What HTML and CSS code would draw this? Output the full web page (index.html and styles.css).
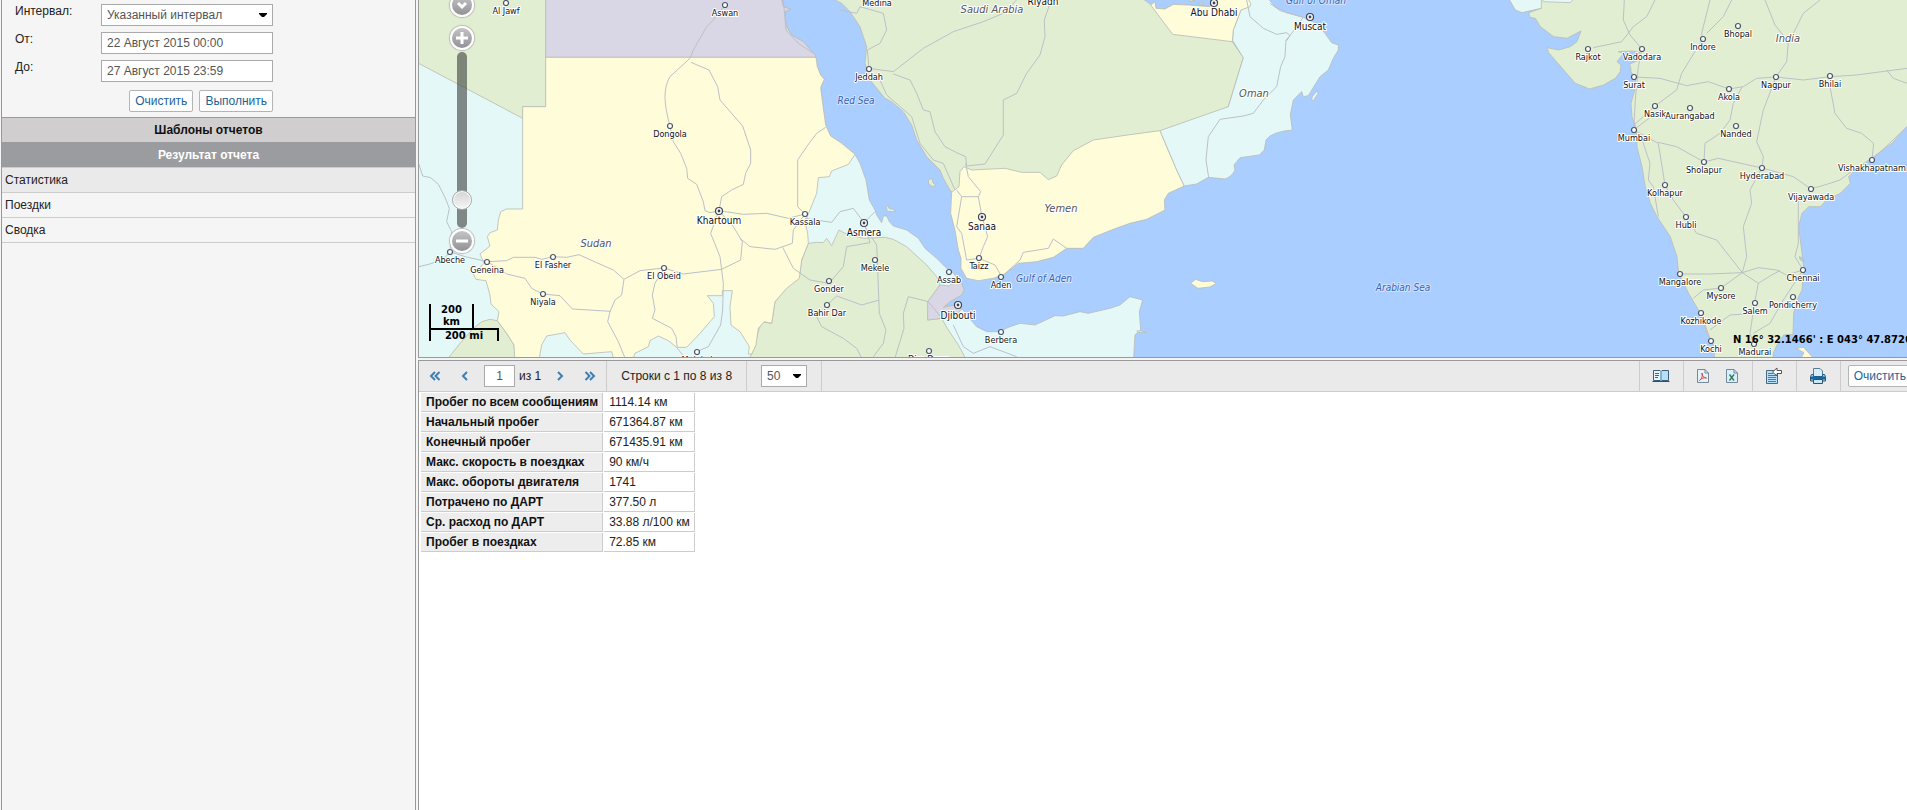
FILE: index.html
```html
<!DOCTYPE html>
<html lang="ru">
<head>
    <meta charset="UTF-8">
    <meta name="viewport" content="width=device-width, initial-scale=1.0">
    <title>Отчеты</title>
    <link rel="stylesheet" href="styles.css">
</head>
<body>
    <aside class="sidebar">
        <form class="report-form">
            <div class="form-row">
                <label for="interval">Интервал:</label>
                <select id="interval" class="field">
                    <option>Указанный интервал</option>
                </select>
            </div>
            <div class="form-row">
                <label for="date-from">От:</label>
                <input type="text" id="date-from" class="field" value="22 Август 2015 00:00">
            </div>
            <div class="form-row">
                <label for="date-to">До:</label>
                <input type="text" id="date-to" class="field" value="27 Август 2015 23:59">
            </div>
            <div class="form-actions">
                <button type="button" class="btn">Очистить</button>
                <button type="button" class="btn">Выполнить</button>
            </div>
        </form>
        <h2 class="panel-title">Шаблоны отчетов</h2>
        <h2 class="panel-title active">Результат отчета</h2>
        <ul class="result-list">
            <li class="selected"><a href="#stat">Статистика</a></li>
            <li><a href="#trips">Поездки</a></li>
            <li><a href="#summary">Сводка</a></li>
        </ul>
    </aside>

    <main class="content">
        <section class="map">
            <svg class="map-canvas" aria-label="Карта">
                <defs>
                    <g id="town"><circle r="2.5" fill="#fff" stroke="#4a5568" stroke-width="1.2"/></g>
                    <g id="capital"><circle r="3.5" fill="#fff" stroke="#3a4254" stroke-width="1.2"/><circle r="1.4" fill="#3a4254"/></g>
                </defs>

                <g transform="translate(-9 0) scale(.33333)">
                    <!-- Africa -->
                    <path class="land cyan" d="M20 -10H1113L1120 20 1143 28 1125 35 1128 75 1145 105 1180 125 1215 165 1222 200 1232 225 1243 238 1232 262 1238 310 1247 375 1262 408 1295 430 1335 463 1350 490 1368 540 1378 600 1395 630 1400 645 1415 668 1420 648 1430 648 1438 665 1450 678 1490 690 1525 715 1545 745 1580 775 1605 800 1630 820 1655 850 1663 870 1655 885 1620 905 1605 922 1635 915 1655 925 1670 945 1700 980 1730 995 1765 995 1800 980 1830 970 1875 975 1935 947 1960 948 2010 935 2035 940 2100 925 2130 915 2160 890 2198 900 2188 935 2192 990 2175 1005 2170 1090H20Z"/>
                    <path class="land green" d="M20 -10H407V320H338V355L20 187Z"/>
                    <path class="land violet" d="M407 -10H1113L1120 20 1143 28 1125 35 1128 75 1145 105 1180 125 1215 165 1218 172H407Z"/>
                    <path class="land green" d="M115 1074L150 1030 190 985 215 965 240 958 262 962 290 1000 312 1035 317 1090H100Z"/>
                    <path class="land green" d="M1195 730L1220 727 1240 728 1250 715 1265 737 1287 690 1305 700 1360 715 1425 712 1450 718 1490 740 1550 795 1580 830 1590 855 1555 905 1553 960 1595 955 1612 985 1645 1035 1675 1090H1010L1025 1062 1035 1040 1043 1000 1055 965 1085 970 1095 905 1150 840 1168 830 1175 780Z"/>
                    <path class="land violet" d="M1590 855L1618 858 1625 850 1655 850 1663 870 1655 885 1620 905 1600 922 1635 915 1655 927 1630 958 1595 955 1553 960V905Z"/>
                    <path class="land yellow" d="M407 172H1218L1222 200 1232 225 1243 238 1232 262 1238 310 1247 375 1262 408 1295 430 1335 463 1315 493 1265 513 1258 530 1225 533 1220 580 1200 630 1185 665 1193 700 1195 730 1175 780 1168 835 1130 865 1095 905 1085 970 1063 965 1045 985 1038 1035 1025 1062H1015L1018 1040 990 995 963 975 960 920 967 872H937V887H892L910 910 913 950 870 1000 830 1042H800L775 1022 745 1008 720 1022 715 1040 675 1060 665 1090H615L605 1055 520 1062 480 1020 465 998 410 1008 395 1035 385 1090H315L312 1035 290 1000 262 962 267 935 243 912 240 885 228 842 198 838 190 822 222 790 210 762 240 738 232 710 240 698 262 690 265 660 272 635 290 627 338 627V320H407Z"/>
                    <!-- Arabian peninsula -->
                    <path class="land green" d="M1255 -10L1295 10 1320 35 1350 80 1370 140 1365 190 1380 240 1425 295 1445 305 1480 335 1505 375 1520 420 1550 470 1590 510 1600 535 1620 570 1640 590 1915 575 2250 420 2455 320 2500 173 2467 125 2230 -10Z"/>
                    <path class="land yellow" d="M1625 577L1647 560 1650 515 1662 500 1685 510 1785 505 1835 517 1890 517 1915 539 1940 528 1955 495 1990 452 2050 420 2160 404 2250 392 2300 510 2323 558 2275 580 2263 600 2265 630 2210 658 2160 670 2110 688 2050 712 2020 745H1970L1930 772 1880 785 1825 790 1785 822 1750 835 1705 842 1670 835 1653 805V775L1645 750 1635 690 1622 640Z"/>
                    <path class="land cyan" d="M2510 -10L2520 18 2493 30 2470 90 2468 122 2500 173 2455 320 2250 392 2300 510 2323 558 2360 552 2395 532 2445 537Q2466 530 2475 510L2472 495 2490 473 2548 465 2563 450 2568 420Q2585 395 2647 390L2641 345 2650 300 2675 275 2680 290 2695 287 2730 230 2755 210 2770 175 2785 150V135L2765 128 2745 100 2720 70 2680 52 2630 38 2595 20 2570 -10Z"/>
                    <path class="land sea" d="M2190 -10L2238 25 2265 27 2290 13 2335 15 2400 20 2425 -10Z"/>
                    <path class="land yellow" d="M2222 15L2235 5 2238 25 2265 27 2290 13 2335 15 2400 20 2425 -10H2510L2522 10 2520 20 2493 30 2470 90 2467 125 2288 103Z"/>
                    <path class="land green" d="M2363 10l15-2 4 3-12 2zM2335-2l20 4-12 3zM1555 540l10-5 5 15 8 5-10 5-12-8z"/>
                    <path class="land cyan" d="M2705 300l2-10 14-18 3 8-14 22zM1430 618l5 0 2 8 12 2 10 7-28-2zM2180 993l15 0 14 5-25-1z"/>
                    <path class="land yellow" d="M2342 850l15-12 20 7 30-2 12 8-20 10-35 4z"/>
                    <!-- India -->
                    <path class="land cyan" d="M3293 -10L3316 30 3336 38 3371 30 3394 25 3500 10 3570 -10Z"/>
                    <path class="land green" d="M3394 -10V25L3356 38 3360 52 3376 55 3391 80 3431 110 3471 115 3513 93 3501 125 3481 140 3446 150 3411 143 3416 158 3461 210 3496 250 3539 267 3581 255 3616 235 3631 215 3633 195 3621 185 3641 160 3625 155 3670 153 3690 158 3688 180 3658 193 3662 200 3663 215 3676 235V265L3663 310 3666 350 3679 385 3681 440 3696 500 3706 560 3721 610 3741 650 3781 710 3801 770 3806 820 3836 880 3871 940 3891 1000 3913 1040V1090H4090V1060L4101 1035 4121 1005 4149 1003 4151 940 4159 905 4176 870 4181 800 4176 760 4166 680 4176 640 4196 620 4231 620 4250 600 4291 580 4321 550 4316 530 4341 505 4391 470 4446 430 4491 380 4560 330V-10H3500L3480 8 3400 5Z"/>
                    <path class="land sea" d="M4168 770l10 4 5 12-12-6z"/>
                    <path class="land yellow" d="M4159 1045L4181 1042 4215 1080H4170L4182 1058Z"/>

                    <g class="roads">
                        <path d="M27 493L38 528 62 533 85 553 105 592 118 625 110 665 125 695 120 755 165 770 232 785 290 782 310 772H375L395 778 428 770 470 772 507 764 560 788 610 810 642 838 635 885 615 900 600 935 593 965 625 1025 645 1074M27 800L60 792 100 778 120 755M232 785L290 822 345 835 365 865 398 882 450 887 487 927 602 934M642 838L690 812 762 804 820 822 935 808 992 780 997 725 970 680 927 632M762 804L735 850 727 885 735 930 727 955 785 985 798 1010 802 1045 825 1074"/>
                        <path d="M945 15L910 60 890 80 850 150 840 175 780 230Q765 255 765 290T780 378L790 425 812 460 830 505 833 535 860 553 880 605 885 632 900 638 927 632 935 590 965 570 1000 553 1007 520 1022 490V450L998 378 930 300 923 260 897 210 843 187M927 632L1000 643 1070 640 1135 655 1185 642 1163 620V480L1190 440 1220 400 1247 382M927 632L902 700 930 770 940 850 938 930 932 975 895 1040 860 1055M990 715L1020 740 1095 748 1147 730 1150 690 1185 642M1118 742L1150 805 1200 840 1257 850 1300 800 1310 740 1380 728 1362 668 1330 625 1290 635 1265 667 1185 655M1362 668L1395 635M1365 680L1400 735 1402 780 1408 940 1428 990 1420 1030 1390 1070M1251 915L1280 888 1355 915 1408 900M1251 915L1220 950 1235 980 1300 1015 1340 1045 1355 1074M1630 975L1660 1040 1690 1060 1740 1040 1820 1070M1555 905L1495 890 1480 940 1482 985 1455 1074M1555 905L1590 948"/>
                        <path d="M1120 0L1128 90 1165 130 1210 160M1290 30L1340 40 1350 20 1420 40 1430 90 1410 130 1372 150 1377 205 1450 215 1540 145 1630 95 1720 65 1780 40 1820 0M1920 10L1903 60 1905 110 1890 165 1850 220 1820 280 1780 300V405L1725 492 1670 498 1667 470 1640 458 1605 440 1575 395 1560 335 1540 330 1520 280 1500 240 1450 222M1410 240L1430 285 1505 350 1530 430 1570 480 1600 490 1635 570M1667 490L1675 530 1712 575 1705 590H1655L1640 570M1705 590L1716 650 1733 710 1720 740 1707 775 1755 795 1775 830 1830 780 1840 757 1915 745 1930 717 1970 745M1655 590L1640 680 1655 700 1670 780 1707 775"/>
                        <path d="M2510 0L2520 50 2560 85 2600 103 2630 98 2640 107 2628 120 2625 170 2612 200 2600 260 2560 300 2530 340 2500 348 2430 358 2395 410 2388 480 2396 532M2640 107L2680 52M2640 107L2630 122M2580 10L2610 32 2680 52"/>
                        <path d="M3643 0L3640 60 3660 105 3696 147 3685 200 3676 300 3671 390 3730 345M3550 143L3635 125 3670 80 3710 50 3735 0M3900 0L3875 100 3878 117 3815 220 3800 270 3735 318 3672 375M3965 0L3940 50 3890 100M4065 0L4095 75 4135 125 4130 185 4098 231 4060 330 4040 425 4060 470 4056 504 4020 570 4025 610 4000 680 4010 770 3997 818 3920 720 3860 700 3828 651 3790 600 3765 555 3745 430 3672 390M4230 0L4180 40 4150 100M3672 231L3750 235 3830 257 3895 245 3957 267 4000 260 4040 235 4098 231 4180 240 4260 230 4340 225 4491 205M3997 260L3970 310 3960 360 3930 400 3885 430 3882 486 3925 475 4056 504 4150 530 4203 567 4260 550 4290 540 4330 510 4386 480 4491 380M3882 486L3800 440 3745 427M4260 260L4275 340 4310 385 4355 400 4391 430 4386 480M4430 210L4450 235 4491 250M3810 822L3900 822 3997 818 4045 803 4100 810 4130 825 4179 810M3997 818L3933 864 3880 870 3850 895M3997 818L4045 850 4085 825 4110 812M4045 850L4034 909 4020 1000 4032 1034M3900 990L3960 945 4034 940M4179 810L4120 900 4080 970 4030 1000M4165 600V730L4155 770 4179 810M3690 400L3720 490 3715 540 3730 560 3745 650M3873 940L3903 1024"/>
                    </g>
                </g>

                <g class="labels" transform="translate(-419 0)">
                    <use href="#town" x="506" y="3"/><text x="506" y="14">Al Jawf</text>
                    <use href="#town" x="725" y="5"/><text x="725" y="16">Aswan</text>
                    <use href="#town" x="670" y="126"/><text x="670" y="137">Dongola</text>
                    <use href="#town" x="553" y="257"/><text x="553" y="268">El Fasher</text>
                    <use href="#town" x="487" y="262"/><text x="487" y="273">Geneina</text>
                    <use href="#town" x="450" y="252"/><text x="450" y="263">Abeche</text>
                    <use href="#town" x="543" y="294"/><text x="543" y="305">Niyala</text>
                    <use href="#town" x="664" y="268"/><text x="664" y="279">El Obeid</text>
                    <use href="#town" x="697" y="352"/><text x="697" y="363">Malakal</text>
                    <text x="877" y="6">Medina</text>
                    <use href="#town" x="869" y="69"/><text x="869" y="80">Jeddah</text>
                    <use href="#town" x="805" y="214"/><text x="805" y="225">Kassala</text>
                    <use href="#town" x="875" y="260"/><text x="875" y="271">Mekele</text>
                    <use href="#town" x="949" y="272"/><text x="949" y="283">Assab</text>
                    <use href="#town" x="829" y="281"/><text x="829" y="292">Gonder</text>
                    <use href="#town" x="827" y="305"/><text x="827" y="316">Bahir Dar</text>
                    <use href="#town" x="1001" y="332"/><text x="1001" y="343">Berbera</text>
                    <use href="#town" x="929" y="351"/><text x="929" y="362">Dire Dawa</text>
                    <use href="#town" x="979" y="258"/><text x="979" y="269">Taizz</text>
                    <use href="#town" x="1001" y="277"/><text x="1001" y="288">Aden</text>
                    <use href="#town" x="1738" y="26"/><text x="1738" y="37">Bhopal</text>
                    <use href="#town" x="1703" y="39"/><text x="1703" y="50">Indore</text>
                    <use href="#town" x="1588" y="49"/><text x="1588" y="60">Rajkot</text>
                    <use href="#town" x="1642" y="49"/><text x="1642" y="60">Vadodara</text>
                    <use href="#town" x="1634" y="77"/><text x="1634" y="88">Surat</text>
                    <use href="#town" x="1776" y="77"/><text x="1776" y="88">Nagpur</text>
                    <use href="#town" x="1830" y="76"/><text x="1830" y="87">Bhilai</text>
                    <use href="#town" x="1729" y="89"/><text x="1729" y="100">Akola</text>
                    <use href="#town" x="1655" y="106"/><text x="1655" y="117">Nasik</text>
                    <use href="#town" x="1690" y="108"/><text x="1690" y="119">Aurangabad</text>
                    <use href="#town" x="1736" y="126"/><text x="1736" y="137">Nanded</text>
                    <use href="#town" x="1634" y="130"/><text x="1634" y="141">Mumbai</text>
                    <use href="#town" x="1704" y="162"/><text x="1704" y="173">Sholapur</text>
                    <use href="#town" x="1762" y="168"/><text x="1762" y="179">Hyderabad</text>
                    <use href="#town" x="1872" y="160"/><text x="1872" y="171">Vishakhapatnam</text>
                    <use href="#town" x="1665" y="185"/><text x="1665" y="196">Kolhapur</text>
                    <use href="#town" x="1811" y="189"/><text x="1811" y="200">Vijayawada</text>
                    <use href="#town" x="1686" y="217"/><text x="1686" y="228">Hubli</text>
                    <use href="#town" x="1680" y="274"/><text x="1680" y="285">Mangalore</text>
                    <use href="#town" x="1721" y="288"/><text x="1721" y="299">Mysore</text>
                    <use href="#town" x="1803" y="270"/><text x="1803" y="281">Chennai</text>
                    <use href="#town" x="1793" y="297"/><text x="1793" y="308">Pondicherry</text>
                    <use href="#town" x="1755" y="303"/><text x="1755" y="314">Salem</text>
                    <use href="#town" x="1701" y="313"/><text x="1701" y="324">Kozhikode</text>
                    <use href="#town" x="1711" y="341"/><text x="1711" y="352">Kochi</text>
                    <use href="#town" x="1754" y="344"/><text x="1755" y="355">Madurai</text>

                    <g class="capitals">
                        <use href="#capital" x="719" y="211"/><text x="719" y="224">Khartoum</text>
                        <use href="#capital" x="864" y="223"/><text x="864" y="236">Asmera</text>
                        <use href="#capital" x="958" y="305"/><text x="958" y="319">Djibouti</text>
                        <use href="#capital" x="982" y="217"/><text x="982" y="230">Sanaa</text>
                        <use href="#capital" x="1214" y="3"/><text x="1214" y="16">Abu Dhabi</text>
                        <use href="#capital" x="1310" y="17"/><text x="1310" y="30">Muscat</text>
                        <text x="1043" y="5">Riyadh</text>
                    </g>
                    <g class="countries">
                        <text x="596" y="247">Sudan</text>
                        <text x="992" y="13">Saudi Arabia</text>
                        <text x="1061" y="212">Yemen</text>
                        <text x="1254" y="97">Oman</text>
                        <text x="1788" y="42">India</text>
                    </g>
                    <g class="waters">
                        <text x="856" y="104">Red Sea</text>
                        <text x="1044" y="282">Gulf of Aden</text>
                        <text x="1403" y="291">Arabian Sea</text>
                        <text x="1316" y="4">Gulf of Oman</text>
                    </g>
                </g>
            </svg>

            <div class="map-zoom">
                <button type="button" class="round" aria-label="Вниз">
                    <svg width="12" height="12" viewBox="0 0 12 12"><path d="M2 4l4 4 4-4"/></svg>
                </button>
                <button type="button" class="round" aria-label="Приблизить">
                    <svg width="14" height="14" viewBox="0 0 14 14"><path d="M7 1v12M1 7h12"/></svg>
                </button>
                <input type="range" class="zoom-slider" aria-label="Масштаб" min="0" max="17" value="2">
                <button type="button" class="round" aria-label="Отдалить">
                    <svg width="14" height="14" viewBox="0 0 14 14"><path d="M1 7h12"/></svg>
                </button>
            </div>
            <div class="map-scale">
                <div class="scale-km">200 km</div>
                <div class="scale-mi">200 mi</div>
            </div>
            <div class="map-coords">N 16° 32.1466' : E 043° 47.8726'</div>
        </section>

        <section class="report">
            <div class="toolbar">
                <div class="tool-group pager">
                    <button type="button" class="icon-btn" aria-label="Первая"><svg class="arrow" width="12" height="12" viewBox="0 0 12 12"><path d="M6 2L2 6l4 4M10.500 2l-4 4 4 4"/></svg></button>
                    <button type="button" class="icon-btn" aria-label="Назад"><svg class="arrow" width="12" height="12" viewBox="0 0 12 12"><path d="M8 2L4 6l4 4"/></svg></button>
                    <label class="page-box"><input type="text" class="page-input" value="1"> из 1</label>
                    <button type="button" class="icon-btn" aria-label="Вперед"><svg class="arrow" width="12" height="12" viewBox="0 0 12 12"><path d="M4 2l4 4-4 4"/></svg></button>
                    <button type="button" class="icon-btn" aria-label="Последняя"><svg class="arrow" width="12" height="12" viewBox="0 0 12 12"><path d="M1.500 2l4 4-4 4M6 2l4 4-4 4"/></svg></button>
                </div>
                <div class="tool-group rows-info">Строки с 1 по 8 из 8</div>
                <div class="tool-group">
                    <select class="field page-size" aria-label="Строк на странице">
                        <option>50</option>
                    </select>
                </div>
                <div class="toolbar-right">
                    <div class="tool-group single">
                        <button type="button" class="icon-btn" aria-label="Показать">
                            <svg width="18" height="14" viewBox="0 0 18 14"><path d="M1.500 1.500H8L9 2.500l1-1h6.500v10H10l-1 1-1-1H1.500z" fill="#e9f6fd" stroke="#3b5f7a"/><path d="M10 2h6v9h-6z" fill="#b9def4"/><path d="M.5 12.500h17" stroke="#3b4d5c"/><path d="M9 2.500v10M3 4.500h4M3 6.500h4M3 8.500h3" stroke="#1b6fa8" fill="none"/></svg>
                        </button>
                    </div>
                    <div class="tool-group files">
                        <button type="button" class="icon-btn" aria-label="PDF">
                            <svg width="12" height="14" viewBox="0 0 12 14"><path d="M.5.500H8L11.500 4v9.500H.5z" fill="#e3f3fc" stroke="#75899a"/><path d="M8 .5V4h3.500" fill="none" stroke="#75899a"/><path d="M2.500 11.500C5 9.500 6 6.500 5 4c-.5 3 2 4.500 4.500 5C7 8.500 4.500 9 2.500 11.500z" fill="none" stroke="#e0453a"/></svg>
                        </button>
                        <button type="button" class="icon-btn" aria-label="Excel">
                            <svg width="12" height="14" viewBox="0 0 12 14"><path d="M.5.500H8L11.500 4v9.500H.5z" fill="#d9effb" stroke="#75899a"/><path d="M8 .5V4h3.500" fill="none" stroke="#75899a"/><path d="M3.500 5.500l4.500 6M8 5.500l-4.500 6" fill="none" stroke="#2c8059" stroke-width="1.400"/></svg>
                        </button>
                    </div>
                    <div class="tool-group single">
                        <button type="button" class="icon-btn" aria-label="Экспорт">
                            <svg width="16" height="18" viewBox="0 0 16 18"><path d="M.5 3.500h11v13H.5z" fill="#b5dff8" stroke="#4b6980"/><path d="M2 6.500h5M2 8.500h8M2 10.500h8M2 12.500h8M2 14.500h8" stroke="#2c86c2"/><path d="M6.500 5L11 1v2.500h4.500v3H11V9z" fill="#fff" stroke="#555"/></svg>
                        </button>
                    </div>
                    <div class="tool-group single">
                        <button type="button" class="icon-btn" aria-label="Печать">
                            <svg width="16" height="16" viewBox="0 0 16 16"><path d="M3.500 8V.5H10L12.500 3v5" fill="#d6eefb" stroke="#5c7d94"/><path d="M1.500 6.500h2v2h9v-2h2l1 2v4.500H.5V8.500z" fill="#a8cfe8" stroke="#2f5873"/><path d="M1 8.500h14v3H1z" fill="#1468a3"/><path d="M3.500 11.500h9v4h-9z" fill="#c7e8fa" stroke="#3a4f60"/></svg>
                        </button>
                    </div>
                    <div class="tool-group last">
                        <button type="button" class="btn">Очистить</button>
                    </div>
                </div>
            </div>

            <table class="stats">
                <tr><th scope="row">Пробег по всем сообщениям</th><td>1114.14 км</td></tr>
                <tr><th scope="row">Начальный пробег</th><td>671364.87 км</td></tr>
                <tr><th scope="row">Конечный пробег</th><td>671435.91 км</td></tr>
                <tr><th scope="row">Макс. скорость в поездках</th><td>90 км/ч</td></tr>
                <tr><th scope="row">Макс. обороты двигателя</th><td>1741</td></tr>
                <tr><th scope="row">Потрачено по ДАРТ</th><td>377.50 л</td></tr>
                <tr><th scope="row">Ср. расход по ДАРТ</th><td>33.88 л/100 км</td></tr>
                <tr><th scope="row">Пробег в поездках</th><td>72.85 км</td></tr>
            </table>
        </section>
    </main>
</body>
</html>
```
FILE: styles.css
```css
* {
    box-sizing: border-box;
}
body {
    margin: 0;
    height: 100vh;
    display: flex;
    gap: 2px;
    padding-left: 1px;
    overflow: hidden;
    background: #f5f5f5;
    color: #222;
    font: 12px/16px "Liberation Sans", Arial, sans-serif;
}
button, input, select {
    font: inherit;
    margin: 0;
}

/* left panel */
.sidebar {
    flex: 0 0 415px;
    border-left: 1px solid #999;
    border-right: 1px solid #999;
    background: #f5f5f5;
}
.report-form {
    width: 271px;
    padding: 4px 0 5px 13px;
}
.form-row {
    display: flex;
    justify-content: space-between;
    margin-bottom: 6px;
}
.form-row label {
    margin-top: -1px;
}
.field {
    width: 172px;
    height: 22px;
    padding: 0 5px;
    border: 1px solid #aaa;
    background: #fff;
    color: #555;
}
select.field {
    appearance: none;
    border-radius: 0;
    background: #fff url("data:image/svg+xml,%3Csvg xmlns='http://www.w3.org/2000/svg' width='8' height='5'%3E%3Cpath d='M0 0h8v1L5 4H3L0 1z'/%3E%3C/svg%3E") no-repeat right 5px center;
}
.form-actions {
    display: flex;
    justify-content: flex-end;
    gap: 6px;
    padding-top: 2px;
}
.btn {
    height: 22px;
    padding: 0 5px;
    border: 1px solid #b4b4b4;
    border-radius: 2px;
    background: #fff;
    color: #1d6398;
    white-space: nowrap;
}
.panel-title {
    margin: 0;
    height: 25px;
    background: #d0cece;
    color: #111;
    font-size: 12px;
    line-height: 24px;
    text-align: center;
    border-top: 1px solid #999;
}
.panel-title.active {
    height: 26px;
    background: #9b9ca0;
    border-color: #9b9ca0;
    border-bottom: 1px solid #ccc;
    color: #fff;
}
.result-list {
    margin: 0;
    padding: 0;
    list-style: none;
}
.result-list li {
    height: 25px;
    padding-left: 3px;
    line-height: 25px;
    border-bottom: 1px solid #ccc;
}
.result-list .selected {
    background: #eaeaea;
}
.result-list a {
    color: #222;
    text-decoration: none;
}

/* the map and toolbar run past the window edge */
.content {
    flex: 1;
    min-width: 0;
    margin-right: -14px;
    display: flex;
    flex-direction: column;
    gap: 2px;
}

/* map */
.map {
    position: relative;
    height: 358px;
    border-left: 1px solid #999;
    border-bottom: 1px solid #999;
    background: #aaceff;
    overflow: hidden;
}
.map-canvas {
    display: block;
    width: 100%;
    height: 100%;
}
.land {
    stroke: #b9bdb6;
    stroke-width: 2.5;
    stroke-linejoin: round;
}
.cyan { fill: #e4f8f8; }
.green { fill: #e1eed1; }
.yellow { fill: #fffcda; }
.violet { fill: #d9d6e6; }
.sea { fill: #aaceff; }
.roads {
    fill: none;
    stroke: #bcc0c8;
    stroke-width: 3;
    stroke-linejoin: round;
}
.labels text {
    fill: #111;
    stroke: #fff;
    stroke-width: 2px;
    stroke-linejoin: round;
    paint-order: stroke;
    text-anchor: middle;
    font: 9px "DejaVu Sans Condensed", "DejaVu Sans", sans-serif;
}
.labels .capitals text {
    font-size: 10px;
}
.labels .countries text {
    font-size: 11px;
    font-style: italic;
    fill: #555;
}
.labels .waters text {
    font-size: 10px;
    font-style: italic;
    fill: #3a62b8;
    stroke: #cfe3ff;
}
.map-zoom {
    position: absolute;
    left: 31px;
    top: -7px;
    width: 24px;
    display: flex;
    flex-direction: column;
    align-items: center;
}
.round {
    width: 24px;
    height: 24px;
    padding: 0;
    display: flex;
    align-items: center;
    justify-content: center;
    border: 2px solid #fff;
    border-radius: 50%;
    background: linear-gradient(#c4c4c6, #929296);
    box-shadow: 0 0 1px 1px #bbb;
}
.round + .round {
    margin-top: 9px;
}
.round path {
    fill: none;
    stroke: #fff;
    stroke-width: 3;
}
.zoom-slider {
    appearance: none;
    writing-mode: vertical-lr;
    direction: rtl;
    width: 20px;
    height: 176px;
    margin: 2px 0 1px;
    background: none;
}
.zoom-slider::-webkit-slider-runnable-track {
    width: 10px;
    height: 176px;
    border-radius: 5px;
    background: rgba(70, 75, 72, 0.65);
}
.zoom-slider::-webkit-slider-thumb {
    appearance: none;
    width: 20px;
    height: 20px;
    margin-left: -5px;
    border: 1px solid #aaa;
    border-radius: 50%;
    background: linear-gradient(#d4d4d4, #f6f6f6);
    box-shadow: inset 0 0 0 1px #fff;
}
.map-scale {
    position: absolute;
    left: 10px;
    bottom: 16px;
    color: #000;
    font: bold 10px/12px "DejaVu Sans", Verdana, sans-serif;
    text-align: center;
}
.scale-km {
    width: 45px;
    height: 26px;
    padding: 0 8px;
    border: 2px solid #000;
    border-top: 0;
}
.scale-mi {
    width: 70px;
    height: 13px;
    margin-top: -2px;
    border: 2px solid #000;
    border-bottom: 0;
}
.map-coords {
    position: absolute;
    right: 6px;
    bottom: 11px;
    color: #000;
    font: bold 10px/12px "DejaVu Sans", Verdana, sans-serif;
    white-space: nowrap;
}

/* report */
.report {
    flex: 1;
    border-top: 1px solid #999;
    border-left: 1px solid #999;
    background: #fff;
}
.toolbar {
    display: flex;
    height: 31px;
    border-bottom: 1px solid #ccc;
    background: #eaeaea;
}
.toolbar-right {
    display: flex;
    margin-left: auto;
    border-left: 1px solid #ccc;
}
.tool-group {
    display: flex;
    align-items: center;
    padding: 0 14px;
    border-right: 1px solid #ccc;
}
.icon-btn {
    display: flex;
    justify-content: center;
    padding: 0;
    border: 0;
    background: none;
}
.arrow path {
    fill: none;
    stroke: #3f7fb0;
    stroke-width: 2;
}
.pager {
    padding: 0 1px;
}
.pager .icon-btn {
    width: 30px;
}
.page-box {
    display: flex;
    align-items: center;
    gap: 4px;
    margin: 0 4px;
}
.page-input {
    width: 31px;
    height: 22px;
    padding: 0;
    border: 1px solid #aaa;
    color: #555;
    text-align: center;
}
.page-size {
    width: 46px;
}
.single {
    width: 44px;
    padding: 0;
    justify-content: center;
}
.files {
    width: 69px;
    padding: 0;
    gap: 17px;
    justify-content: center;
}
.last {
    padding: 0 9px 0 7px;
    border: 0;
}
.stats {
    margin-left: 1px;
    border-spacing: 1px;
}
.stats th, .stats td {
    height: 19px;
    padding: 0 4px 0 5px;
    border-right: 1px solid #ccc;
    border-bottom: 1px solid #ccc;
    line-height: 18px;
    text-align: left;
    white-space: nowrap;
}
.stats th {
    background: #ededed;
    color: #111;
}
```
